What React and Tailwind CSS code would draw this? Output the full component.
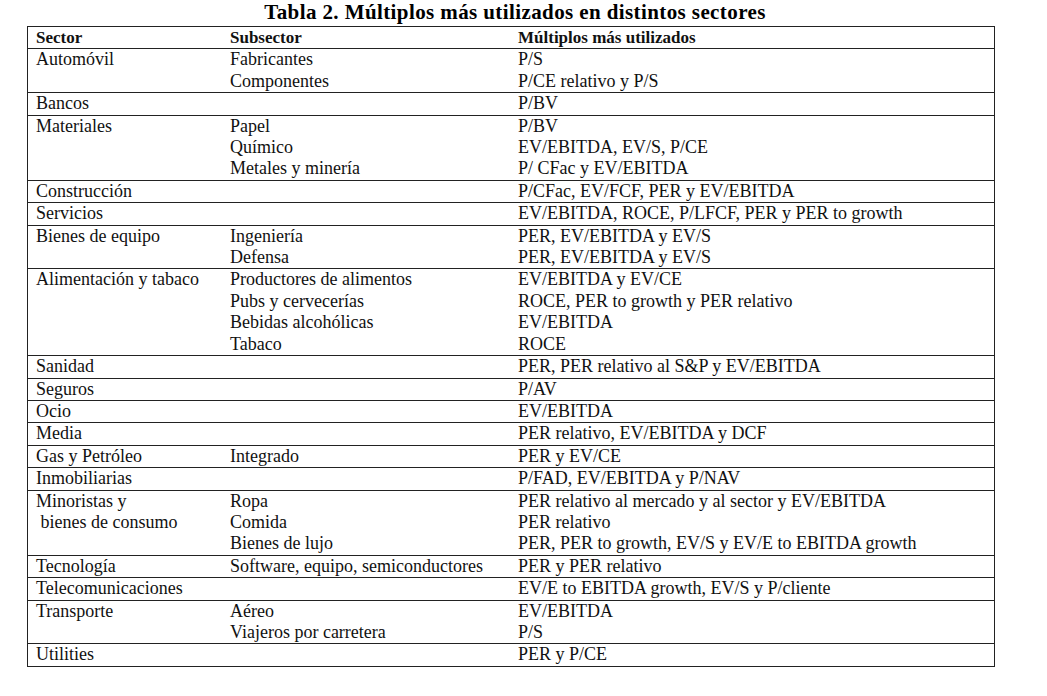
const rows = [
  { sector: ['Automóvil'], sub: ['Fabricantes', 'Componentes'], mult: ['P/S', 'P/CE relativo y P/S'] },
  { sector: ['Bancos'], sub: [], mult: ['P/BV'] },
  {
    sector: ['Materiales'],
    sub: ['Papel', 'Químico', 'Metales y minería'],
    mult: ['P/BV', 'EV/EBITDA, EV/S, P/CE', 'P/ CFac y EV/EBITDA'],
  },
  { sector: ['Construcción'], sub: [], mult: ['P/CFac, EV/FCF, PER y EV/EBITDA'] },
  { sector: ['Servicios'], sub: [], mult: ['EV/EBITDA, ROCE, P/LFCF, PER y PER to growth'] },
  {
    sector: ['Bienes de equipo'],
    sub: ['Ingeniería', 'Defensa'],
    mult: ['PER, EV/EBITDA y EV/S', 'PER, EV/EBITDA y EV/S'],
  },
  {
    sector: ['Alimentación y tabaco'],
    sub: ['Productores de alimentos', 'Pubs y cervecerías', 'Bebidas alcohólicas', 'Tabaco'],
    mult: ['EV/EBITDA y EV/CE', 'ROCE, PER to growth y PER relativo', 'EV/EBITDA', 'ROCE'],
  },
  { sector: ['Sanidad'], sub: [], mult: ['PER, PER relativo al S&P y EV/EBITDA'] },
  { sector: ['Seguros'], sub: [], mult: ['P/AV'] },
  { sector: ['Ocio'], sub: [], mult: ['EV/EBITDA'] },
  { sector: ['Media'], sub: [], mult: ['PER relativo, EV/EBITDA y DCF'] },
  { sector: ['Gas y Petróleo'], sub: ['Integrado'], mult: ['PER y EV/CE'] },
  { sector: ['Inmobiliarias'], sub: [], mult: ['P/FAD, EV/EBITDA y P/NAV'] },
  {
    sector: ['Minoristas y', '\u00a0bienes de consumo'],
    sub: ['Ropa', 'Comida', 'Bienes de lujo'],
    mult: [
      'PER relativo al mercado y al sector y EV/EBITDA',
      'PER relativo',
      'PER, PER to growth, EV/S y EV/E to EBITDA growth',
    ],
  },
  { sector: ['Tecnología'], sub: ['Software, equipo, semiconductores'], mult: ['PER y PER relativo'] },
  { sector: ['Telecomunicaciones'], sub: [], mult: ['EV/E to EBITDA growth, EV/S y P/cliente'] },
  { sector: ['Transporte'], sub: ['Aéreo', 'Viajeros por carretera'], mult: ['EV/EBITDA', 'P/S'] },
  { sector: ['Utilities'], sub: [], mult: ['PER y P/CE'] },
];

function Cell({ lines }) {
  return (
    <div className="pl-[8px]">
      {lines.map((l, i) => (
        <div key={i} className="whitespace-pre">
          {l}
        </div>
      ))}
    </div>
  );
}

export default function App() {
  return (
    <div
      className="min-h-screen bg-white text-[#111]"
      style={{ fontFamily: '"Liberation Serif", "Times New Roman", serif' }}
    >
      <div className="ml-[27px] w-[968px]">
        <h1 className="text-center text-[21px] font-bold leading-[24px] tracking-[0.4px] pl-[8px] mb-[2px] text-black">
          Tabla 2. Múltiplos más utilizados en distintos sectores
        </h1>
        <div className="border border-[#222] text-[18px] leading-[21.4px]">
          <div className="grid grid-cols-[194px_288px_1fr] font-bold text-[17px]">
            <Cell lines={['Sector']} />
            <Cell lines={['Subsector']} />
            <Cell lines={['Múltiplos más utilizados']} />
          </div>
          {rows.map((r, i) => (
            <div key={i} className="grid grid-cols-[194px_288px_1fr] border-t border-[#222]">
              <Cell lines={r.sector} />
              <Cell lines={r.sub} />
              <Cell lines={r.mult} />
            </div>
          ))}
        </div>
      </div>
    </div>
  );
}
